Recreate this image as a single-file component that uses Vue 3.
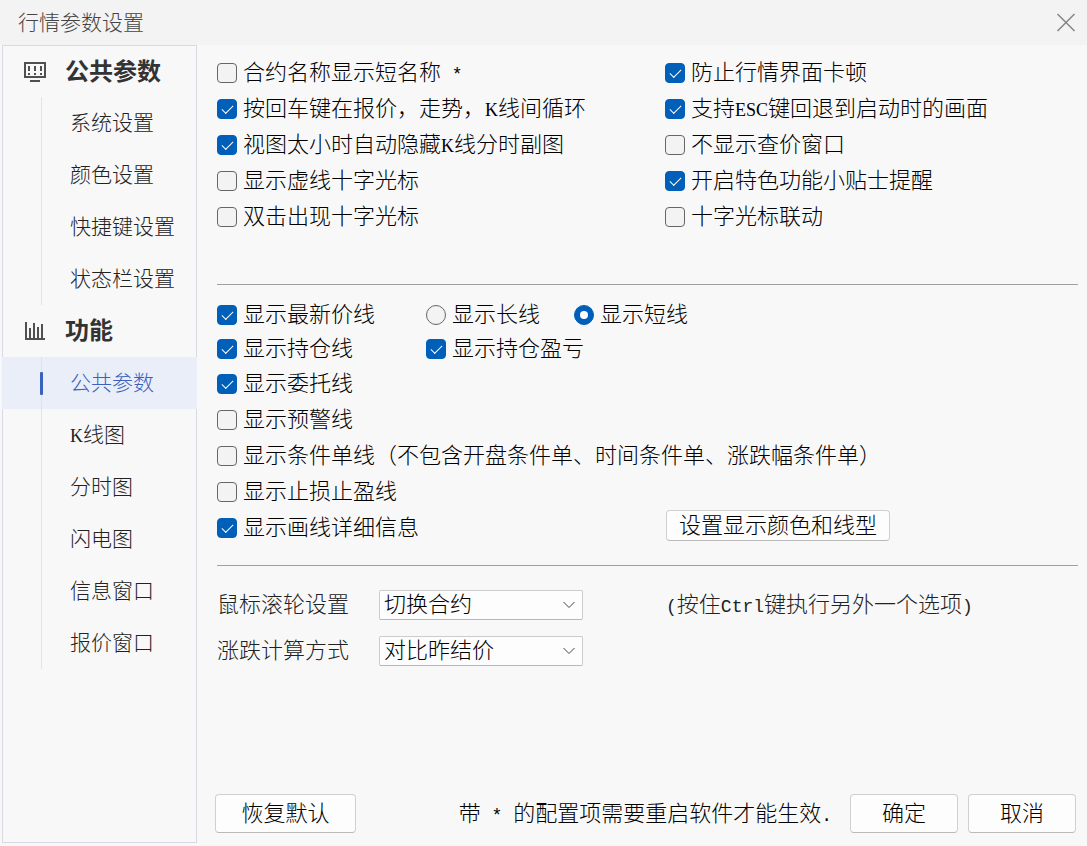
<script setup>
import { h, ref } from 'vue'

// Latin runs: capitals in a serif, everything else in a monospace face,
// both small enough to take about half a Han character each
const MixedText = (props) =>
  props.text
    .split(/([ -~]+)/)
    .filter(Boolean)
    .map((part) => {
      if (/^[A-Z]+$/.test(part)) return h('span', { class: 'latin caps' }, part)
      return /^[ -~]/.test(part) ? h('span', { class: 'latin' }, part) : part
    })
MixedText.props = ['text']

const groups = [
  { title: '公共参数', icon: 'monitor', items: ['系统设置', '颜色设置', '快捷键设置', '状态栏设置'] },
  { title: '功能', icon: 'chart', items: ['公共参数', 'K线图', '分时图', '闪电图', '信息窗口', '报价窗口'] },
]
const active = ref('1-0')

const general = ref([
  { text: '合约名称显示短名称 *', on: false },
  { text: '防止行情界面卡顿', on: true },
  { text: '按回车键在报价，走势，K线间循环', on: true },
  { text: '支持ESC键回退到启动时的画面', on: true },
  { text: '视图太小时自动隐藏K线分时副图', on: true },
  { text: '不显示查价窗口', on: false },
  { text: '显示虚线十字光标', on: false },
  { text: '开启特色功能小贴士提醒', on: true },
  { text: '双击出现十字光标', on: false },
  { text: '十字光标联动', on: false },
])

const showLatest = ref(true)
const lineLength = ref('short')
const showPosition = ref(true)
const showProfit = ref(true)
const lines = ref([
  { text: '显示委托线', on: true },
  { text: '显示预警线', on: false },
  { text: '显示条件单线（不包含开盘条件单、时间条件单、涨跌幅条件单）', on: false },
  { text: '显示止损止盈线', on: false },
])
const showDetail = ref(true)
const wheel = ref('切换合约')
const calc = ref('对比昨结价')
</script>

<template>
  <div class="dialog">
    <header class="titlebar">
      <h1>行情参数设置</h1>
      <button class="close" type="button" aria-label="关闭">
        <svg width="20" height="20" viewBox="0 0 20 20" fill="none" stroke="#858585" stroke-width="1.5">
          <path d="M1.5 1 18.5 18M18.5 1 1.5 18" />
        </svg>
      </button>
    </header>

    <div class="body">
      <nav class="sidebar">
        <section v-for="(group, g) in groups" :key="group.title">
          <h2>
            <svg v-if="group.icon === 'monitor'" width="22" height="20" viewBox="0 0 22 20" fill="#505050">
              <path fill-rule="evenodd" d="M0 0H22V16H0ZM2 2V14H20V2Z" />
              <path d="M4 4h2v5H4zM10 4h2v5h-2zM16 4h2v5h-2zM4 11h2v2H4zM10 11h2v2h-2zM16 11h2v2h-2zM6 18h10v2H6z" />
            </svg>
            <svg v-else width="22" height="20" viewBox="0 0 22 20" fill="#505050">
              <path d="M1 1h2v16h18v2H1zM5 7h2v10H5zM9 2h2v15H9zM13 6h2v11h-2zM17 3h2v14h-2z" />
            </svg>
            {{ group.title }}
          </h2>
          <ul>
            <li v-for="(item, i) in group.items" :key="item">
              <a href="#" :class="{ active: active === `${g}-${i}` }" @click.prevent="active = `${g}-${i}`">
                <span><MixedText :text="item" /></span>
              </a>
            </li>
          </ul>
        </section>
      </nav>

      <main class="content">
        <section class="general">
          <label v-for="opt in general" :key="opt.text" class="option">
            <input v-model="opt.on" type="checkbox" />
            <span><MixedText :text="opt.text" /></span>
          </label>
        </section>
        <hr />
        <section class="lines">
          <div class="row tight">
            <label class="option"><input v-model="showLatest" type="checkbox" /><span>显示最新价线</span></label>
            <div class="radios">
              <label class="option"><input v-model="lineLength" type="radio" name="length" value="long" /><span>显示长线</span></label>
              <label class="option"><input v-model="lineLength" type="radio" name="length" value="short" /><span>显示短线</span></label>
            </div>
          </div>
          <div class="row tight">
            <label class="option"><input v-model="showPosition" type="checkbox" /><span>显示持仓线</span></label>
            <label class="option"><input v-model="showProfit" type="checkbox" /><span>显示持仓盈亏</span></label>
          </div>
          <label v-for="opt in lines" :key="opt.text" class="option">
            <input v-model="opt.on" type="checkbox" />
            <span>{{ opt.text }}</span>
          </label>
          <div class="row wide">
            <label class="option"><input v-model="showDetail" type="checkbox" /><span>显示画线详细信息</span></label>
            <button class="btn style-btn" type="button">设置显示颜色和线型</button>
          </div>
        </section>
        <hr />
        <section class="selects">
          <div class="row wide">
            <div class="field">
              <label for="wheel">鼠标滚轮设置</label>
              <div class="select">
                <select id="wheel" v-model="wheel">
                  <option>切换合约</option>
                  <option>切换周期</option>
                </select>
                <svg width="12" height="8" viewBox="0 0 12 8" fill="none" stroke="#444"><path d="M.5 1 6 6.5 11.5 1" /></svg>
              </div>
            </div>
            <span class="hint"><MixedText text="(按住Ctrl键执行另外一个选项)" /></span>
          </div>
          <div class="field">
            <label for="calc">涨跌计算方式</label>
            <div class="select">
              <select id="calc" v-model="calc">
                <option>对比昨结价</option>
                <option>对比昨收价</option>
              </select>
              <svg width="12" height="8" viewBox="0 0 12 8" fill="none" stroke="#444"><path d="M.5 1 6 6.5 11.5 1" /></svg>
            </div>
          </div>
        </section>

        <footer>
          <button class="btn reset" type="button">恢复默认</button>
          <p><MixedText text="带 * 的配置项需要重启软件才能生效." /></p>
          <button class="btn" type="button">确定</button>
          <button class="btn" type="button">取消</button>
        </footer>
      </main>
    </div>
  </div>
</template>

<style>
body {
  margin: 0;
  background: #f8f8f8;
}
.latin {
  font-family: "Liberation Mono", monospace;
  font-size: 18px;
  line-height: 1;
  white-space: pre;
}
.latin.caps {
  font-family: "Liberation Serif", serif;
}
</style>

<style scoped>
* {
  box-sizing: border-box;
}
.dialog {
  display: flex;
  flex-direction: column;
  min-height: 100vh;
  background: #f8f8f8;
  color: #000;
  font: 300 22px/30px "Liberation Serif", "Noto Sans CJK SC", sans-serif;
  white-space: nowrap;
}
button,
select {
  font: inherit;
  color: inherit;
}
h1,
h2,
ul,
p {
  margin: 0;
  padding: 0;
}
.titlebar {
  display: flex;
  align-items: center;
  justify-content: space-between;
  height: 45px;
  padding: 0 11px 0 18px;
  background: #f3f3f3;
}
h1 {
  font-size: 21px;
  font-weight: 300;
  color: #444;
}
.close {
  display: flex;
  padding: 0;
  border: 0;
  background: none;
}
.body {
  display: flex;
  flex: 1;
}
.sidebar {
  flex: none;
  width: 195px;
  margin: 0 0 3px 2px;
  border: 1px solid #d9dbe4;
}
h2 {
  display: flex;
  align-items: center;
  gap: 19px;
  height: 52px;
  padding-left: 21px;
  font-size: 24px;
  font-weight: 700;
  color: #333;
}
section:first-child > h2 {
  height: 51px;
}
ul {
  list-style: none;
  font-size: 21px;
  background: linear-gradient(#e3e4e8, #e3e4e8) 38px 0 / 1px 100% no-repeat;
}
li a {
  display: flex;
  align-items: center;
  height: 52px;
  margin: 0 -1px;
  padding-left: 38px;
  color: #222;
  text-decoration: none;
}
li a::before {
  content: "";
  width: 3px;
  height: 23px;
  margin-right: 27px;
  border-radius: 1px;
}
li a.active {
  color: #3a62bd;
  background: linear-gradient(#dfe2ea, #dfe2ea) 39px 0 / 1px 100% no-repeat #e9eef9;
}
li a.active::before {
  background: #3a62bd;
}
.content {
  display: flex;
  flex: 1;
  flex-direction: column;
  min-width: 0;
  padding: 10px 9px 13px 20px;
}
hr {
  width: 100%;
  height: 1px;
  margin: 0;
  border: 0;
  background: #a0a0a0;
}
.general {
  display: grid;
  grid-template-columns: 448px 1fr;
  padding-bottom: 49px;
}
.option {
  display: flex;
  align-items: center;
  gap: 6px;
  height: 36px;
}
.option input {
  appearance: none;
  display: grid;
  place-items: center;
  flex: none;
  width: 20px;
  height: 20px;
  margin: 0;
  border: 1px solid #666;
  border-radius: 4px;
  background: #f3f3f3;
}
.option input:checked {
  border-color: #005fb8;
  background: #005fb8;
}
.option input[type="checkbox"]:checked::after {
  content: "";
  width: 10px;
  height: 5px;
  margin-bottom: 3px;
  border: solid #fff;
  border-width: 0 0 1px 1px;
  transform: rotate(-45deg);
}
.option input[type="radio"] {
  border-radius: 50%;
}
.option input[type="radio"]:checked::after {
  content: "";
  width: 8px;
  height: 8px;
  border-radius: 50%;
  background: #fff;
}
.lines {
  padding: 13px 0 19px;
}
.row {
  display: grid;
  grid-template-columns: 209px 1fr;
  align-items: center;
}
.row.wide {
  grid-template-columns: 449px 1fr;
}
.tight .option {
  height: 34px;
}
.radios {
  display: flex;
  gap: 34px;
}
.btn {
  height: 39px;
  width: 108px;
  padding: 0;
  border: 1px solid #d0d0d0;
  border-bottom-color: #bababa;
  border-radius: 4px;
  background: #fdfdfd;
}
.style-btn {
  align-self: start;
  width: 224px;
  height: 31px;
  line-height: 28px;
}
.selects {
  display: grid;
  gap: 16px;
  padding-top: 24px;
}
.field {
  display: grid;
  grid-template-columns: 162px 204px;
  align-items: center;
  color: #222;
}
.select {
  display: grid;
  align-items: center;
  color: #000;
}
.select select,
.select svg {
  grid-area: 1 / 1;
}
.select select {
  appearance: none;
  width: 100%;
  height: 30px;
  padding: 0 4px;
  border: 1px solid #ccc;
  border-bottom-color: #b8b8b8;
  border-radius: 2px;
  background: #fdfdfd;
  line-height: 28px;
}
.select svg {
  justify-self: end;
  margin-right: 8px;
  pointer-events: none;
}
.hint {
  color: #222;
}
footer {
  display: flex;
  align-items: center;
  gap: 10px;
  margin: auto 2px 0 -2px;
}
footer p {
  margin: 0 8px 0 auto;
}
.reset {
  width: 141px;
}
</style>
